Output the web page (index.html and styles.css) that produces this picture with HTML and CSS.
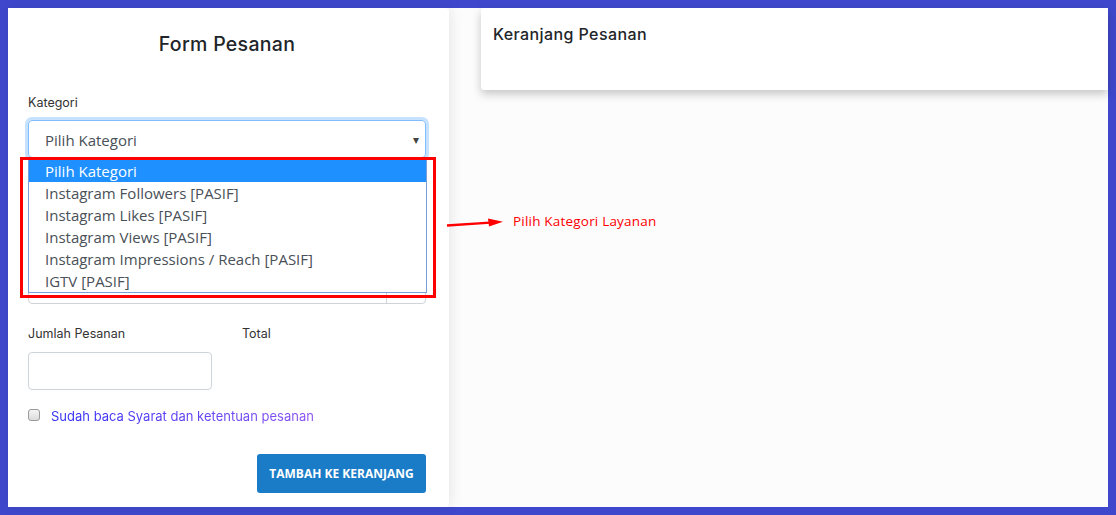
FILE: index.html
```html
<!DOCTYPE html>
<html lang="id">
<head>
<meta charset="utf-8">
<title>Form Pesanan</title>
<link rel="stylesheet" href="styles.css">
</head>
<body>
<div class="frame">
  <div class="inner">
    <section class="form-card">
      <h2 class="form-title">Form Pesanan</h2>

      <div class="group">
        <label class="label">Kategori</label>
        <div class="select-wrap">
          <div class="select">Pilih Kategori<span class="caret">&#9662;</span></div>
          <ul class="dropdown">
            <li class="opt active">Pilih Kategori</li>
            <li class="opt">Instagram Followers [PASIF]</li>
            <li class="opt">Instagram Likes [PASIF]</li>
            <li class="opt">Instagram Views [PASIF]</li>
            <li class="opt">Instagram Impressions / Reach [PASIF]</li>
            <li class="opt">IGTV [PASIF]</li>
          </ul>
          <div class="highlight-box"></div>
          <div class="annotation">
            <svg class="arrow" width="60" height="12" viewBox="0 0 60 12">
              <path d="M1 8.5 L44 5.6" stroke="#ff0000" stroke-width="2.4" fill="none"/>
              <polygon points="42,1.5 57,4.8 43,9.5" fill="#ff0000"/>
            </svg>
            <span class="note">Pilih Kategori Layanan</span>
          </div>
        </div>
      </div>

      <div class="group-hidden">
        <div class="plain-select"></div>
        <div class="input-group">
          <div class="ig-main"></div>
          <div class="ig-addon"></div>
        </div>
      </div>

      <div class="row">
        <div class="col">
          <label class="label label-tight">Jumlah Pesanan</label>
          <div class="input"></div>
        </div>
        <div class="col">
          <label class="label label-tight">Total</label>
        </div>
      </div>

      <div class="check-row">
        <span class="checkbox"></span>
        <span class="check-text">Sudah baca Syarat dan ketentuan pesanan</span>
      </div>

      <div class="actions">
        <button class="btn">TAMBAH KE KERANJANG</button>
      </div>
    </section>

    <section class="cart-card">
      <h3 class="cart-title">Keranjang Pesanan</h3>
    </section>
  </div>
</div>
</body>
</html>
```

FILE: styles.css
```css
* { box-sizing: border-box; }
html, body { margin: 0; padding: 0; }
body { width: 1116px; height: 515px; overflow: hidden; }

.frame {
  width: 1116px;
  height: 515px;
  background: #3f48cc;
  padding: 8px;
}
.inner {
  height: 499px;
  background: #fcfcfc;
  display: flex;
  align-items: flex-start;
}

.form-card {
  width: 441px;
  height: 499px;
  background: #ffffff;
  border-radius: 0 4px 4px 0;
  box-shadow: 2px 0 14px rgba(0,0,0,0.09);
  padding: 21px 23px 0 20px;
  font-family: "Inter", "Open Sans", sans-serif;
  color: #212529;
  position: relative;
  z-index: 1;
}
.form-title {
  margin: 0 0 34px;
  text-align: center;
  font-size: 19.5px;
  font-weight: 500;
  line-height: 30px;
  letter-spacing: 0.3px;
}

.label {
  display: block;
  font-size: 12.5px;
  line-height: 20px;
  color: #333;
  margin-bottom: 7px;
}
.label-tight { margin-bottom: 8px; }

.select-wrap { position: relative; }
.select {
  height: 38px;
  border: 1px solid #80bdff;
  border-radius: 4px;
  box-shadow: 0 0 0 3px rgba(0,123,255,0.22);
  padding: 0 16px;
  font-family: "Open Sans", "Noto Sans", sans-serif;
  font-size: 15px;
  line-height: 38px;
  color: #495057;
  position: relative;
}
.caret {
  position: absolute;
  right: 6px;
  top: 0;
  font-size: 12px;
  color: #444;
}
.dropdown {
  position: absolute;
  left: 0;
  top: 39px;
  width: 399px;
  margin: 0;
  padding: 0;
  list-style: none;
  background: #fff;
  border: 1px solid #7a9fd8;
  font-family: "Open Sans", "Noto Sans", sans-serif;
  font-size: 15px;
  color: #495057;
  z-index: 3;
}
.opt {
  height: 22px;
  line-height: 22px;
  padding-left: 16px;
  white-space: nowrap;
}
.opt.active { background: #1e90ff; color: #fff; }

.highlight-box {
  position: absolute;
  left: -8px;
  top: 37px;
  width: 416px;
  height: 141px;
  border: 3px solid #ff0000;
  z-index: 4;
}
.annotation {
  position: absolute;
  left: 418px;
  top: 92px;
  display: flex;
  align-items: center;
  z-index: 5;
  white-space: nowrap;
}
.arrow { display: block; margin-top: 3px; }
.note {
  margin-left: 7px;
  font-family: "Open Sans", "Noto Sans", sans-serif;
  font-size: 13.5px;
  color: #ff0000;
  letter-spacing: 0.2px;
}

.group-hidden {
  padding-top: 41px;
  margin-bottom: 20px;
}
.plain-select {
  height: 38px;
  border: 1px solid #ced4da;
  border-radius: 4px;
  margin-bottom: 29px;
}
.input-group {
  display: flex;
  height: 38px;
  border: 1px solid #ced4da;
  border-radius: 4px;
}
.ig-main { flex: 1; }
.ig-addon { width: 39px; border-left: 1px solid #ced4da; }

.row { display: flex; gap: 30px; }
.col { width: 184px; }
.input {
  height: 38px;
  border: 1px solid #ced4da;
  border-radius: 4px;
}

.check-row {
  display: flex;
  align-items: center;
  margin-top: 16px;
  height: 20px;
}
.checkbox {
  width: 12px;
  height: 12px;
  border: 1px solid #9a9a9a;
  border-radius: 3px;
  background: linear-gradient(#f4f4f4, #dcdcdc);
  margin-right: 11px;
  margin-top: -3px;
}
.check-text {
  font-size: 13px;
  background: linear-gradient(90deg, #2f2ff5, #8a52f0);
  -webkit-background-clip: text;
  background-clip: text;
  color: transparent;
}

.actions {
  display: flex;
  justify-content: flex-end;
  margin-top: 28px;
}
.btn {
  width: 169px;
  height: 39px;
  border: none;
  border-radius: 3px;
  background: #1a7cc7;
  color: #fff;
  font-family: "Open Sans", sans-serif;
  font-weight: 700;
  font-size: 12px;
  letter-spacing: 0;
  padding: 0;
}

.cart-card {
  flex: 1;
  margin-left: 32px;
  height: 82px;
  background: #fff;
  border-radius: 3px 0 0 3px;
  box-shadow: 0 4px 10px rgba(0,0,0,0.22);
  padding: 14px 12px;
  font-family: "Inter", "Open Sans", sans-serif;
}
.cart-title {
  margin: 0;
  font-size: 16px;
  font-weight: 500;
  line-height: 24px;
  letter-spacing: 0.4px;
  color: #212529;
}
```
